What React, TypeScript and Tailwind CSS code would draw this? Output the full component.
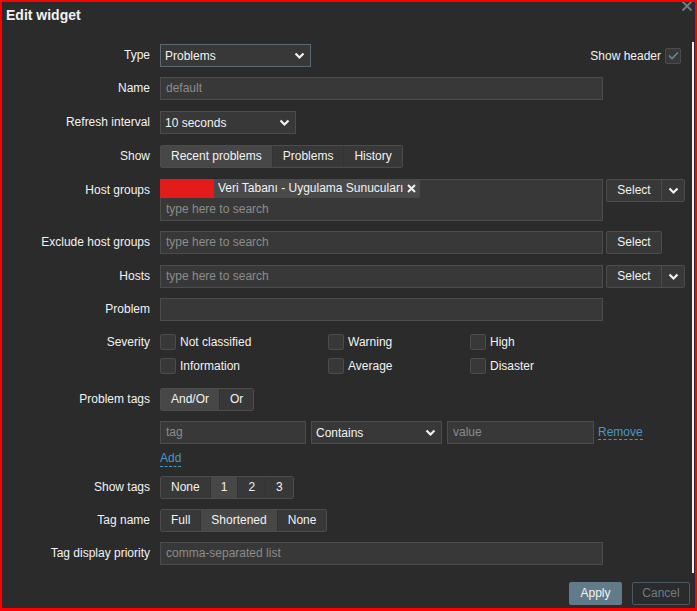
import type { ReactNode } from 'react'

function Chevron() {
  return (
    <svg width="11" height="8" viewBox="0 0 11 8" className="shrink-0">
      <path d="M1.5 1.5l4 4 4-4" fill="none" stroke="#f2f2f2" strokeWidth="2.2" />
    </svg>
  )
}

function Row({ label, children, className = '', lh = 'leading-[23px]' }: { label: string; children: ReactNode; className?: string; lh?: string }) {
  return (
    <div className={`flex items-start ${className}`}>
      <div className={`w-[148px] shrink-0 text-right ${lh}`}>{label}</div>
      <div className="ml-[10px] flex-1 min-w-0">{children}</div>
    </div>
  )
}

function TextInput({ placeholder, w = 'w-[443px]' }: { placeholder?: string; w?: string }) {
  return (
    <div className={`${w} h-[23px] bg-[#383838] border border-[#4c4c4c] px-[5px] leading-[21px] text-[#8c8c8c]`}>
      {placeholder}
    </div>
  )
}

function Select({ value, w, focus = false }: { value: string; w: string; focus?: boolean }) {
  return (
    <div
      className={`${w} h-[23px] bg-[#383838] border ${focus ? 'border-[#5a6a75]' : 'border-[#4c4c4c]'} pl-[4px] pr-[5px] flex items-center justify-between`}
    >
      <span>{value}</span>
      <Chevron />
    </div>
  )
}

function Segmented({ items, active, px = 'px-[10px]' }: { items: string[]; active: number; px?: string }) {
  return (
    <div className="inline-flex h-[23px] border border-[#4c4c4c] rounded-[2px] overflow-hidden">
      {items.map((item, i) => (
        <div
          key={item + i}
          className={`${px} leading-[21px] ${i > 0 ? 'border-l border-[#333333]' : ''} ${i === active ? 'bg-[#474747]' : 'bg-[#383838]'}`}
        >
          {item}
        </div>
      ))}
    </div>
  )
}

function SelectButton({ dropdown = true }: { dropdown?: boolean }) {
  return (
    <div className="inline-flex h-[23px] border border-[#4c4c4c] rounded-[2px] bg-[#383838] shrink-0">
      <div className="w-[54px] text-center leading-[21px]">Select</div>
      {dropdown && (
        <div className="w-[23px] border-l border-[#4c4c4c] flex items-center justify-center">
          <Chevron />
        </div>
      )}
    </div>
  )
}

function Checkbox({ label }: { label: string }) {
  return (
    <div className="flex items-center h-[20px]">
      <div className="w-[16px] h-[16px] bg-[#383838] border border-[#4c4c4c] rounded-[2px]" />
      <span className="ml-[4px]">{label}</span>
    </div>
  )
}

export default function App() {
  return (
    <div
      className="relative w-[697px] h-[611px] bg-[#2b2b2b] border-t-2 border-l-2 border-r-2 border-b-[3px] border-[#ff0000] text-[12px] text-[#f2f2f2] overflow-hidden"
      style={{ fontFamily: '"Liberation Sans", Arial, sans-serif' }}
    >
      <div className="px-[4px] pt-[2px] h-[30px] leading-[22px] text-[14px] font-bold">Edit widget</div>

      <svg className="absolute right-[2px] top-[-2px]" width="12" height="12" viewBox="0 0 12 12">
        <path d="M1.5 1.5l9 9M10.5 1.5l-9 9" stroke="#6d7f8b" strokeWidth="1.8" />
      </svg>

      <div className="absolute left-[690px] top-[40px] w-[2px] h-[531px] bg-[#eeeeee]" />

      <div className="flex flex-col mt-[12px]">
        <Row label="Type" lh="leading-[22px]">
          <div className="flex items-center justify-between pr-[14px]">
            <Select value="Problems" w="w-[151px]" focus />
            <div className="flex items-center">
              <span>Show header</span>
              <div className="ml-[4px] w-[16px] h-[16px] bg-[#383838] border border-[#4c4c4c] rounded-[2px] flex items-center justify-center">
                <svg width="11" height="9" viewBox="0 0 11 9">
                  <path d="M1 4.5l3 3 6-6" fill="none" stroke="#6a8593" strokeWidth="1.6" />
                </svg>
              </div>
            </div>
          </div>
        </Row>

        <Row label="Name" className="mt-[10px]">
          <TextInput placeholder="default" />
        </Row>

        <Row label="Refresh interval" className="mt-[11px]">
          <Select value="10 seconds" w="w-[136px]" />
        </Row>

        <Row label="Show" className="mt-[11px]">
          <Segmented items={['Recent problems', 'Problems', 'History']} active={0} />
        </Row>

        <Row label="Host groups" className="mt-[11px]" lh="leading-[23px]">
          <div className="flex items-start gap-[3px]">
            <div className="w-[443px] h-[42px] bg-[#383838] border border-[#4c4c4c]">
              <div className="flex h-[19px] mt-[-1px] ml-[-1px]">
                <div className="w-[54px] bg-[#e31b1b]" />
                <div className="bg-[#4a4a4a] pl-[4px] pr-[4px] leading-[19px] flex items-center rounded-r-[2px]">
                  <span>Veri Tabanı - Uygulama Sunucuları</span>
                  <svg className="ml-[4px]" width="9" height="9" viewBox="0 0 9 9">
                    <path d="M1 1l7 7M8 1l-7 7" stroke="#f2f2f2" strokeWidth="2" />
                  </svg>
                </div>
              </div>
              <div className="px-[5px] leading-[22px] text-[#8c8c8c]">type here to search</div>
            </div>
            <SelectButton />
          </div>
        </Row>

        <Row label="Exclude host groups" className="mt-[10px]">
          <div className="flex items-start gap-[3px]">
            <TextInput placeholder="type here to search" />
            <SelectButton dropdown={false} />
          </div>
        </Row>

        <Row label="Hosts" className="mt-[11px]">
          <div className="flex items-start gap-[3px]">
            <TextInput placeholder="type here to search" />
            <SelectButton />
          </div>
        </Row>

        <Row label="Problem" className="mt-[10px]">
          <TextInput />
        </Row>

        <Row label="Severity" className="mt-[11px]" lh="leading-[20px]">
          <div className="grid grid-cols-[168px_142px_auto] gap-y-[4px]">
            <Checkbox label="Not classified" />
            <Checkbox label="Warning" />
            <Checkbox label="High" />
            <Checkbox label="Information" />
            <Checkbox label="Average" />
            <Checkbox label="Disaster" />
          </div>
        </Row>

        <Row label="Problem tags" className="mt-[12px]">
          <Segmented items={['And/Or', 'Or']} active={0} />
        </Row>

        <Row label="" className="mt-[10px]">
          <div className="flex items-center">
            <TextInput placeholder="tag" w="w-[146px]" />
            <div className="ml-[5px]">
              <Select value="Contains" w="w-[131px]" />
            </div>
            <div className="ml-[5px]">
              <TextInput placeholder="value" w="w-[147px]" />
            </div>
            <span className="ml-[4px] text-[#4796c4] border-b border-dashed border-[#4796c4] leading-[14px]">Remove</span>
          </div>
          <div className="mt-[5px] h-[18px]">
            <span className="text-[#4796c4] border-b border-dashed border-[#4796c4] leading-[15px] inline-block">Add</span>
          </div>
        </Row>

        <Row label="Show tags" className="mt-[9px]">
          <Segmented items={['None', '1', '2', '3']} active={1} />
        </Row>

        <Row label="Tag name" className="mt-[10px]">
          <Segmented items={['Full', 'Shortened', 'None']} active={1} />
        </Row>

        <Row label="Tag display priority" className="mt-[10px]">
          <TextInput placeholder="comma-separated list" />
        </Row>

        <div className="flex justify-end gap-[10px] pr-[5px] mt-[17px]">
          <div className="w-[53px] h-[23px] bg-[#627b89] rounded-[2px] text-center leading-[23px] text-[#f4f4f4]">Apply</div>
          <div className="w-[58px] h-[23px] border border-[#4a5964] rounded-[2px] text-center leading-[21px] text-[#6d7d88]">Cancel</div>
        </div>
      </div>
    </div>
  )
}
